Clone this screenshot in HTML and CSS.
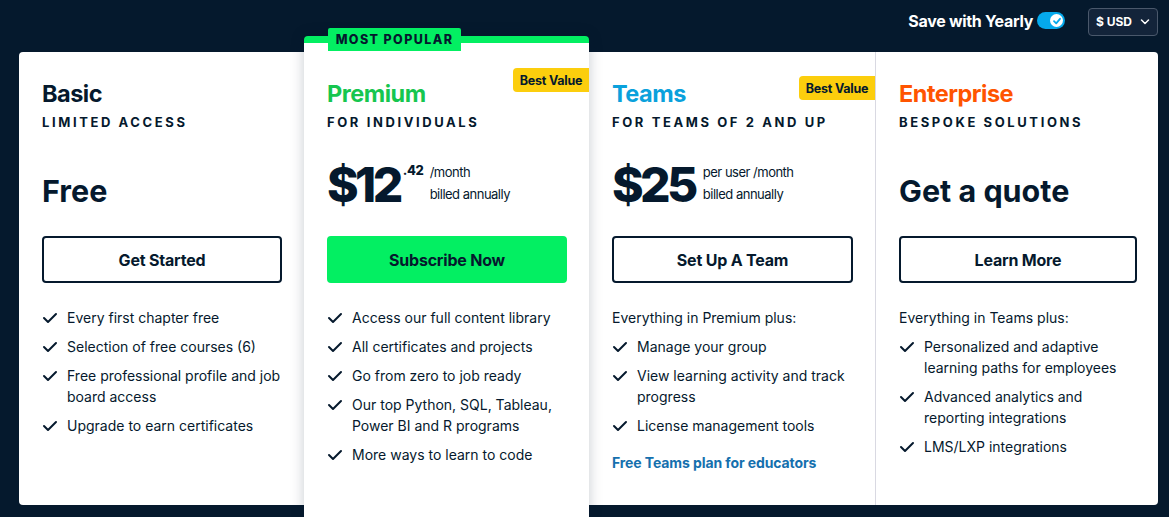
FILE: index.html
```html
<!DOCTYPE html>
<html lang="en">
<head>
<meta charset="utf-8">
<title>Pricing</title>
<link rel="stylesheet" href="styles.css">
</head>
<body>
<header class="topbar">
  <label class="yearly">
    <span>Save with Yearly</span>
    <span class="toggle"><span class="knob"><svg width="10" height="10" viewBox="0 0 10 10"><path d="M2 5.2 L4.2 7.3 L8 2.8" fill="none" stroke="#05a9ec" stroke-width="1.8" stroke-linecap="round" stroke-linejoin="round"/></svg></span></span>
  </label>
  <button class="currency">$ USD <svg width="10" height="6" viewBox="0 0 10 6"><path d="M1.5 1 L5 4.5 L8.5 1" fill="none" stroke="#fff" stroke-width="1.5" stroke-linecap="round" stroke-linejoin="round"/></svg></button>
</header>

<main class="plans">
  <section class="plan">
    <h2 class="plan-name">Basic</h2>
    <p class="plan-sub">LIMITED ACCESS</p>
    <div class="price"><span class="price-text">Free</span></div>
    <a class="btn">Get Started</a>
    <ul class="features">
      <li><svg class="check" viewBox="0 0 16 12"><path d="M2 6 L6 10 L14 2"/></svg><span>Every first chapter free</span></li>
      <li><svg class="check" viewBox="0 0 16 12"><path d="M2 6 L6 10 L14 2"/></svg><span>Selection of free courses (6)</span></li>
      <li><svg class="check" viewBox="0 0 16 12"><path d="M2 6 L6 10 L14 2"/></svg><span>Free professional profile and job board access</span></li>
      <li><svg class="check" viewBox="0 0 16 12"><path d="M2 6 L6 10 L14 2"/></svg><span>Upgrade to earn certificates</span></li>
    </ul>
  </section>

  <section class="plan plan-featured">
    <div class="tab">MOST POPULAR</div>
    <div class="badge badge-premium">Best Value</div>
    <h2 class="plan-name green">Premium</h2>
    <p class="plan-sub">FOR INDIVIDUALS</p>
    <div class="price">
      <span class="amount">$12</span><span class="cents">.42</span>
      <div class="terms"><span>/month</span><span>billed annually</span></div>
    </div>
    <a class="btn btn-green">Subscribe Now</a>
    <ul class="features">
      <li><svg class="check" viewBox="0 0 16 12"><path d="M2 6 L6 10 L14 2"/></svg><span>Access our full content library</span></li>
      <li><svg class="check" viewBox="0 0 16 12"><path d="M2 6 L6 10 L14 2"/></svg><span>All certificates and projects</span></li>
      <li><svg class="check" viewBox="0 0 16 12"><path d="M2 6 L6 10 L14 2"/></svg><span>Go from zero to job ready</span></li>
      <li><svg class="check" viewBox="0 0 16 12"><path d="M2 6 L6 10 L14 2"/></svg><span>Our top Python, SQL, Tableau, Power BI and R programs</span></li>
      <li><svg class="check" viewBox="0 0 16 12"><path d="M2 6 L6 10 L14 2"/></svg><span>More ways to learn to code</span></li>
    </ul>
  </section>

  <section class="plan plan-teams">
    <div class="badge badge-teams">Best Value</div>
    <h2 class="plan-name blue">Teams</h2>
    <p class="plan-sub">FOR TEAMS OF 2 AND UP</p>
    <div class="price">
      <span class="amount">$25</span>
      <div class="terms terms-wide"><span>per user /month</span><span>billed annually</span></div>
    </div>
    <a class="btn">Set Up A Team</a>
    <ul class="features">
      <li class="intro">Everything in Premium plus:</li>
      <li><svg class="check" viewBox="0 0 16 12"><path d="M2 6 L6 10 L14 2"/></svg><span>Manage your group</span></li>
      <li><svg class="check" viewBox="0 0 16 12"><path d="M2 6 L6 10 L14 2"/></svg><span>View learning activity and track progress</span></li>
      <li><svg class="check" viewBox="0 0 16 12"><path d="M2 6 L6 10 L14 2"/></svg><span>License management tools</span></li>
    </ul>
    <a class="edu-link">Free Teams plan for educators</a>
  </section>

  <section class="plan plan-enterprise">
    <h2 class="plan-name orange">Enterprise</h2>
    <p class="plan-sub">BESPOKE SOLUTIONS</p>
    <div class="price"><span class="price-text">Get a quote</span></div>
    <a class="btn">Learn More</a>
    <ul class="features">
      <li class="intro">Everything in Teams plus:</li>
      <li><svg class="check" viewBox="0 0 16 12"><path d="M2 6 L6 10 L14 2"/></svg><span>Personalized and adaptive learning paths for employees</span></li>
      <li><svg class="check" viewBox="0 0 16 12"><path d="M2 6 L6 10 L14 2"/></svg><span>Advanced analytics and reporting integrations</span></li>
      <li><svg class="check" viewBox="0 0 16 12"><path d="M2 6 L6 10 L14 2"/></svg><span>LMS/LXP integrations</span></li>
    </ul>
  </section>
</main>
</body>
</html>
```

FILE: styles.css
```css
* { box-sizing: border-box; }

html, body {
  margin: 0;
  height: 100%;
  overflow: hidden;
}

body {
  background: #05192d;
  color: #05192d;
  font-family: Inter, "Noto Sans", "Liberation Sans", sans-serif;
}

.topbar {
  height: 43px;
  display: flex;
  justify-content: flex-end;
  align-items: center;
  padding: 0 11px 0 0;
  gap: 23px;
}

.yearly {
  display: flex;
  align-items: center;
  gap: 4px;
  color: #fff;
  font-weight: 700;
  font-size: 16px;
  letter-spacing: -0.3px;
  margin-top: -2px;
}

.toggle {
  width: 28px;
  height: 17px;
  border-radius: 9px;
  background: #05a9ec;
  display: flex;
  justify-content: flex-end;
  align-items: center;
  padding: 2px;
}

.knob {
  width: 13px;
  height: 13px;
  border-radius: 50%;
  background: #fff;
  display: flex;
  align-items: center;
  justify-content: center;
}

.currency {
  width: 70px;
  height: 28px;
  background: #13243a;
  border: 1px solid #4a586b;
  border-radius: 4px;
  color: #fff;
  font-family: inherit;
  font-weight: 700;
  font-size: 12px;
  display: flex;
  align-items: center;
  gap: 8px;
  padding: 0 0 0 7px;
}

.plans {
  margin: 9px 11px 0 19px;
  height: 453px;
  background: #fff;
  border-radius: 4px;
  display: flex;
}

.plan {
  width: 285px;
  flex: none;
  padding: 25px 22px 0 23px;
  position: relative;
}

.plan-featured {
  margin: -16px 0 -12px;
  padding-top: 34px;
  border-top: 7px solid #03ef62;
  border-radius: 4px 4px 0 0;
  background: #fff;
  box-shadow: 0 0 14px rgba(5, 25, 45, 0.22);
  z-index: 1;
}

.plan-teams { width: 286px; }

.plan-enterprise {
  width: 283px;
  border-left: 1px solid #d9d9e2;
  padding-right: 21px;
}

.tab {
  position: absolute;
  top: -15px;
  left: 24px;
  width: 133px;
  height: 23px;
  background: #03ef62;
  border-radius: 2px 2px 0 0;
  font-size: 12.5px;
  font-weight: 800;
  letter-spacing: 1.4px;
  display: flex;
  align-items: center;
  justify-content: center;
}

.badge {
  position: absolute;
  right: 0;
  width: 76px;
  height: 24px;
  background: #fcce0d;
  border-radius: 4px 0 0 4px;
  font-size: 12.5px;
  font-weight: 700;
  letter-spacing: -0.2px;
  display: flex;
  align-items: center;
  justify-content: center;
}

.badge-premium { top: 25px; }
.badge-teams { top: 24px; }

.plan-name {
  margin: 0;
  font-size: 23.5px;
  line-height: 32px;
  font-weight: 700;
  letter-spacing: -0.5px;
  padding-top: 1px;
}

.green { color: #16c64f; }
.blue { color: #0aa1dc; }
.orange { color: #ff5400; }

.plan-sub {
  margin: 3px 0 0;
  font-size: 13px;
  line-height: 18px;
  font-weight: 700;
  letter-spacing: 2.6px;
}

.price {
  margin-top: 30px;
  height: 60px;
  display: flex;
  align-items: center;
}

.price-text {
  font-size: 30.5px;
  font-weight: 700;
  letter-spacing: 0;
  margin-top: -2px;
}

.amount {
  font-size: 48px;
  line-height: 48px;
  font-weight: 800;
  letter-spacing: -3.6px;
  margin-top: -12px;
}

.cents {
  align-self: flex-start;
  margin: 1px 0 0 3px;
  font-size: 13px;
  font-weight: 800;
  letter-spacing: -0.3px;
}

.terms {
  display: flex;
  flex-direction: column;
  margin: -16px 0 0 6px;
  font-size: 13px;
  line-height: 22px;
  letter-spacing: -0.5px;
}

.terms-wide { margin-left: 8px; }

.btn {
  margin-top: 15px;
  height: 47px;
  border: 2px solid #05192d;
  border-radius: 4px;
  display: flex;
  align-items: center;
  justify-content: center;
  font-size: 16px;
  font-weight: 700;
  letter-spacing: -0.2px;
}

.btn-green {
  background: #03ef62;
  border-color: #03ef62;
}

.features {
  list-style: none;
  margin: 24px 0 0;
  padding: 0;
  display: flex;
  flex-direction: column;
  gap: 8px;
  font-size: 14px;
  line-height: 21px;
}

.features li {
  display: flex;
  align-items: flex-start;
  gap: 9px;
}

.check {
  flex: none;
  width: 16px;
  height: 12px;
  margin-top: 5px;
  fill: none;
  stroke: #05192d;
  stroke-width: 2;
  stroke-linecap: round;
  stroke-linejoin: round;
}

.edu-link {
  display: block;
  margin-top: 16px;
  font-size: 14px;
  line-height: 21px;
  font-weight: 700;
  letter-spacing: -0.1px;
  color: #1570ae;
}
```
